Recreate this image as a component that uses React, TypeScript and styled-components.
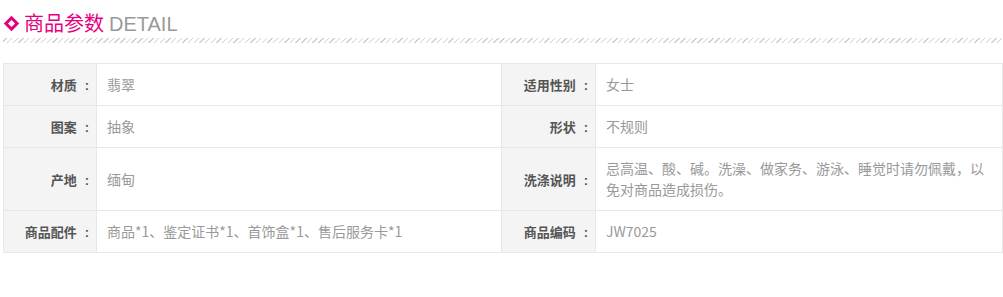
import React from 'react'
import styled, { createGlobalStyle } from 'styled-components'

const GlobalStyle = createGlobalStyle`
  html, body {
    margin: 0;
    padding: 0;
    background: #fff;
  }
  body {
    font-family: "Microsoft YaHei", "Noto Sans CJK SC", "Noto Sans", sans-serif;
  }
`

const Wrap = styled.div`
  width: 1000px;
  padding: 10px 0 0 3px;
`

const Header = styled.div`
  display: flex;
  align-items: center;
  height: 26px;
  padding-left: 2px;
`

const Diamond = styled.span`
  display: inline-block;
  width: 5px;
  height: 5px;
  border: 3px solid #e4007f;
  transform: rotate(45deg);
  margin: 0 7px 0 1px;
`

const Title = styled.h2`
  margin: 0;
  font-size: 20px;
  font-weight: normal;
  color: #e4007f;
  line-height: 26px;
`

const Sub = styled.span`
  color: #999;
  margin-left: 5px;
  font-family: "Liberation Sans", Arial, sans-serif;
`

const Hatch = styled.div`
  height: 5px;
  margin-top: 2px;
  background-image: repeating-linear-gradient(
    135deg,
    transparent 0 2px,
    #cfcfcf 2px 3px,
    transparent 3px 4px
  );
`

const Table = styled.table`
  margin-top: 20px;
  width: 999px;
  border-collapse: collapse;
  table-layout: fixed;
`

const Label = styled.th`
  background: #f4f4f4;
  border: 1px solid #e8e8e8;
  color: #555;
  font-size: 13px;
  font-weight: bold;
  text-align: right;
  padding: 10px 7px 10px 0;
  line-height: 21px;
  height: 21px;
  vertical-align: middle;
  white-space: nowrap;
`

const Colon = styled.span`
  display: inline-block;
  line-height: 1;
  font-family: "Liberation Sans", Arial, sans-serif;
  margin-left: 8px;
`

const Value = styled.td`
  border: 1px solid #e8e8e8;
  color: #999;
  font-size: 14px;
  padding: 10px 12px 10px 10px;
  line-height: 21px;
  vertical-align: middle;
`

const rows: [string, string, string, string][] = [
  ['材质', '翡翠', '适用性别', '女士'],
  ['图案', '抽象', '形状', '不规则'],
  ['产地', '缅甸', '洗涤说明', '忌高温、酸、碱。洗澡、做家务、游泳、睡觉时请勿佩戴，以免对商品造成损伤。'],
  ['商品配件', '商品*1、鉴定证书*1、首饰盒*1、售后服务卡*1', '商品编码', 'JW7025'],
]

const App = () => {
  return (
    <Wrap>
      <GlobalStyle />
      <Header>
        <Diamond />
        <Title>
          商品参数<Sub>DETAIL</Sub>
        </Title>
      </Header>
      <Hatch />
      <Table>
        <colgroup>
          <col style={{ width: 93 }} />
          <col style={{ width: 405 }} />
          <col style={{ width: 94 }} />
          <col style={{ width: 407 }} />
        </colgroup>
        <tbody>
          {rows.map(([l1, v1, l2, v2]) => (
            <tr key={l1}>
              <Label>
                {l1}
                <Colon>:</Colon>
              </Label>
              <Value>{v1}</Value>
              <Label>
                {l2}
                <Colon>:</Colon>
              </Label>
              <Value>{v2}</Value>
            </tr>
          ))}
        </tbody>
      </Table>
    </Wrap>
  )
}

export default App
